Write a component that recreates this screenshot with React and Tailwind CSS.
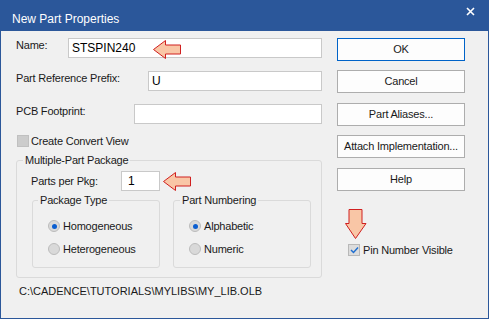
import React from "react";

const LeftArrow = () => (
  <svg width="29" height="20" viewBox="0 0 29 20" className="block">
    <polygon
      points="0.5,9.5 12.5,0.5 12.5,5 27.5,5 27.5,14 12.5,14 12.5,18.5"
      fill="#f9c6a6"
      stroke="#d02020"
      strokeWidth="1"
    />
  </svg>
);

const DownArrow = () => (
  <svg width="22" height="31" viewBox="0 0 22 31" className="block">
    <polygon
      points="4,0.5 17,0.5 17,14.5 21,14.5 10.5,29.5 0.5,14.5 4,14.5"
      fill="#f9c6a6"
      stroke="#d02020"
      strokeWidth="1"
    />
  </svg>
);

const Radio = ({ checked, label }) => (
  <div className="flex items-center h-[14px] leading-[14px]">
    <span className="w-[12px] h-[12px] rounded-full border border-[#bcbcbc] bg-[#d9d9d9] flex items-center justify-center">
      {checked && <span className="w-[5px] h-[5px] rounded-full bg-[#0b5ed0]" />}
    </span>
    <span className="ml-[3px]">{label}</span>
  </div>
);

const Btn = ({ children, primary, className = "" }) => (
  <div
    className={`h-[23px] w-[128px] flex items-center justify-center bg-[#fdfdfd] border ${
      primary ? "border-[#0063c8]" : "border-[#adadad]"
    } ${className}`}
  >
    {children}
  </div>
);

export default function App() {
  return (
    <div
      className="w-[489px] h-[319px] flex flex-col bg-[#2b579a] text-[11px] text-[#1a1a1a] tracking-[-0.2px]"
      style={{ fontFamily: '"Liberation Sans", Arial, sans-serif' }}
    >
      {/* Title bar */}
      <div className="h-[31px] flex items-center justify-between pl-[12px] pr-[14px] text-white text-[12px] tracking-normal">
        <span className="mt-[6px]">New Part Properties</span>
        <svg width="9" height="9" viewBox="0 0 9 9" className="mb-[8px]">
          <path d="M1 1 L8 8 M8 1 L1 8" stroke="#ffffff" strokeWidth="1.6" />
        </svg>
      </div>

      {/* Body */}
      <div className="flex-1 mx-[1px] mb-[1px] bg-[#f0f0f0] flex">
        {/* Left column */}
        <div className="w-[321px] pl-[15px] pt-[7px] flex flex-col">
          <div className="flex items-start">
            <span className="w-[52px] leading-[14px]">Name:</span>
            <div className="relative">
              <div className="w-[254px] h-[20px] bg-white border border-[#c9c9c9] pl-[3px] flex items-center text-[12px] text-black tracking-normal">
                STSPIN240
              </div>
              <div className="absolute left-[85px] top-[2px]">
                <LeftArrow />
              </div>
            </div>
          </div>

          <div className="flex items-start mt-[13px]">
            <span className="w-[132px] leading-[14px]">Part Reference Prefix:</span>
            <div className="w-[174px] h-[20px] bg-white border border-[#c9c9c9] pl-[3px] flex items-center text-[12px] text-black">
              U
            </div>
          </div>

          <div className="flex items-start mt-[13px]">
            <span className="w-[118px] leading-[14px]">PCB Footprint:</span>
            <div className="w-[188px] h-[20px] bg-white border border-[#c9c9c9]" />
          </div>

          <div className="flex items-center mt-[10px] h-[14px]">
            <span className="w-[12px] h-[12px] ml-[1px] bg-[#cccccc] border border-[#c0c0c0]" />
            <span className="ml-[2px] leading-[14px]">Create Convert View</span>
          </div>

          <fieldset className="mt-[5px] w-[306px] border border-[#dadada] rounded-[3px] pl-[14px] pr-[9px] pb-[9px]">
            <legend className="ml-[-8px] px-[2px] leading-[14px]">Multiple-Part Package</legend>

            <div className="flex items-center mt-[4px]">
              <span className="w-[90px] leading-[14px]">Parts per Pkg:</span>
              <div className="relative">
                <div className="w-[39px] h-[20px] bg-white border border-[#c9c9c9] pl-[6px] flex items-center text-[12px] text-black">
                  1
                </div>
                <div className="absolute left-[42px] top-[1px]">
                  <LeftArrow />
                </div>
              </div>
            </div>

            <div className="flex mt-[2px] gap-[13px] ml-[1px]">
              <fieldset className="w-[128px] border border-[#dadada] rounded-[3px] pl-[15px] pt-[12px] pb-[11px]">
                <legend className="ml-[-10px] px-[2px] leading-[14px]">Package Type</legend>
                <Radio checked label="Homogeneous" />
                <div className="mt-[9px]">
                  <Radio label="Heterogeneous" />
                </div>
              </fieldset>
              <fieldset className="w-[138px] border border-[#dadada] rounded-[3px] pl-[15px] pt-[12px] pb-[11px]">
                <legend className="ml-[-9px] px-[2px] leading-[14px]">Part Numbering</legend>
                <Radio checked label="Alphabetic" />
                <div className="mt-[9px]">
                  <Radio label="Numeric" />
                </div>
              </fieldset>
            </div>
          </fieldset>

          <div className="mt-[6px] ml-[3px] leading-[14px] tracking-normal">C:\CADENCE\TUTORIALS\MYLIBS\MY_LIB.OLB</div>
        </div>

        {/* Right column */}
        <div className="ml-[15px] pt-[7px] flex flex-col">
          <Btn primary>OK</Btn>
          <Btn className="mt-[9px]">Cancel</Btn>
          <Btn className="mt-[10px]">Part Aliases...</Btn>
          <Btn className="mt-[9px]">Attach Implementation...</Btn>
          <Btn className="mt-[10px]">Help</Btn>

          <div className="relative flex items-center mt-[52px] ml-[11px] h-[14px]">
            <div className="absolute left-[-3px] top-[-34px]">
              <DownArrow />
            </div>
            <span className="w-[12px] h-[12px] bg-[#dcdcdc] border border-[#b8b8b8] flex items-center justify-center">
              <svg width="9" height="8" viewBox="0 0 9 8">
                <path d="M1 4 L3.5 6.5 L8 1.5" fill="none" stroke="#1f6fd0" strokeWidth="1.5" />
              </svg>
            </span>
            <span className="ml-[3px] leading-[14px]">Pin Number Visible</span>
          </div>
        </div>
      </div>
    </div>
  );
}
